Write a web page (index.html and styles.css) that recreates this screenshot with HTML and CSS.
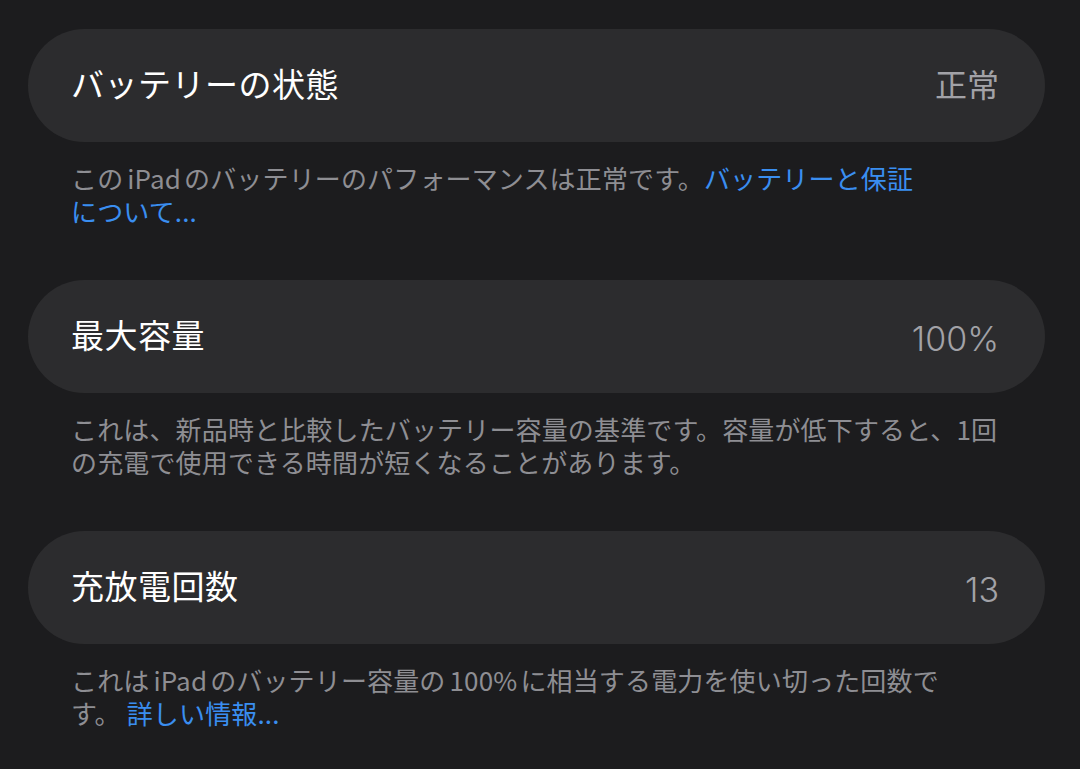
FILE: index.html
```html
<!DOCTYPE html>
<html lang="ja">
<head>
    <meta charset="UTF-8">
    <meta name="viewport" content="width=device-width, initial-scale=1.0">
    <title>バッテリーの状態</title>
    <link rel="stylesheet" href="styles.css">
</head>
<body>

    <div class="settings">
        <div class="group">
            <div class="cell">
                <span class="label">バッテリーの状態</span>
                <span class="value">正常</span>
            </div>
            <p class="footer">この<span class="latin">iPad</span>のバッテリーのパフォーマンスは正常です。<a href="#">バッテリーと保証<br>について...</a></p>
        </div>

        <div class="group">
            <div class="cell">
                <span class="label">最大容量</span>
                <span class="value num">100%</span>
            </div>
            <p class="footer">これは、新品時と比較したバッテリー容量の基準です。容量が低下すると、1回<br>の充電で使用できる時間が短くなることがあります。</p>
        </div>

        <div class="group">
            <div class="cell">
                <span class="label">充放電回数</span>
                <span class="value num">13</span>
            </div>
            <p class="footer">これは<span class="latin">iPad</span>のバッテリー容量の<span class="latin">100%</span>に相当する電力を使い切った回数で<br>す。 <a href="#">詳しい情報...</a></p>
        </div>
    </div>

</body>
</html>
```

FILE: styles.css
```css
body {
    font-family: "Noto Sans CJK JP", "Noto Sans", sans-serif;
    background-color: #1c1c1e;
    margin: 0;
    padding: 0;
    height: 100vh;
    overflow: hidden;
}
.settings {
    padding: 29px 35px 0 28px;
}
.cell {
    display: flex;
    align-items: center;
    justify-content: space-between;
    height: 113px;
    padding: 0 46px 6px 43px;
    box-sizing: border-box;
    background-color: #2c2c2e;
    border-radius: 57px;
}
.label {
    color: #ffffff;
    font-size: 33px;
    letter-spacing: 0.5px;
}
.value {
    color: #a2a2a7;
    font-size: 32px;
}
.value.num {
    margin-top: 10px;
    font-family: "Inter", "Noto Sans CJK JP", sans-serif;
    font-size: 34px;
    font-weight: 300;
    line-height: 40px;
}
.footer {
    margin: 19px 0 53px;
    padding: 0 20px 0 43px;
    color: #8e8e93;
    font-size: 26px;
    line-height: 33px;
    letter-spacing: 0.15px;
}
.footer .latin {
    margin: 0 3px 0 4px;
}
.footer a {
    color: #3a8ef0;
    text-decoration: none;
}
```
